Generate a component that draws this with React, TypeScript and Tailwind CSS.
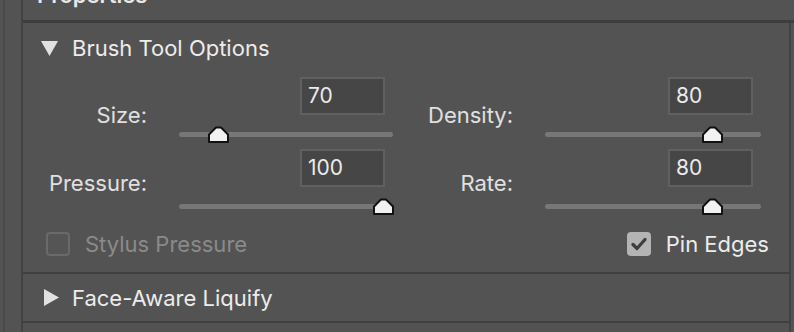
import type { ReactNode } from 'react';

type Field = {
  label: string;
  value: string;
  thumb: number;
  labelPad: string;
};

const rows: Field[][] = [
  [
    { label: 'Size:', value: '70', thumb: 29, labelPad: 'pt-[25px]' },
    { label: 'Density:', value: '80', thumb: 157, labelPad: 'pt-[25px]' },
  ],
  [
    { label: 'Pressure:', value: '100', thumb: 194, labelPad: 'pt-[21px]' },
    { label: 'Rate:', value: '80', thumb: 157, labelPad: 'pt-[21px]' },
  ],
];

function Thumb() {
  return (
    <svg width="21" height="17" viewBox="0 0 21 17">
      <polygon points="1,16 1,8.5 8,1.5 13,1.5 20,8.5 20,16" fill="#f1f1f1" stroke="#111" strokeWidth="2" strokeLinejoin="round" />
    </svg>
  );
}

function Control({ value, thumb }: { value: string; thumb: number }) {
  return (
    <div className="flex flex-col">
      <div className="self-end mr-2 w-[85px] h-[38px] bg-[#464646] border-2 border-[#606060] pl-[6px] flex items-center text-[21px] leading-6 text-[#ebebeb]">
        {value}
      </div>
      <div className="relative h-[28px]">
        <div className="mt-[17px] h-[5px] rounded-full bg-[#777777]" />
        {/* thumb sits over the track */}
        <div className="absolute top-[11px]" style={{ left: thumb }}>
          <Thumb />
        </div>
      </div>
    </div>
  );
}

function Label({ text, pad }: { text: string; pad: string }) {
  return <div className={`text-right text-[22px] leading-[26px] text-[#e0e0e0] ${pad}`}>{text}</div>;
}

function Check({ checked, children }: { checked: boolean; children: ReactNode }) {
  return (
    <div className="h-6 flex items-center gap-[15px]">
      {checked ? (
        <div className="w-6 h-6 rounded-[4px] bg-[#b4b4b4] flex items-center justify-center">
          <svg width="16" height="14" viewBox="0 0 16 14">
            <path d="M2 7.5 L6 11.5 L14 2.5" fill="none" stroke="#3e3e3e" strokeWidth="3.2" strokeLinecap="round" strokeLinejoin="round" />
          </svg>
        </div>
      ) : (
        <div className="w-6 h-6 rounded-[4px] border-2 border-[#6a6a6a] bg-[#555555]" />
      )}
      <span className={`text-[22px] leading-6 ${checked ? 'text-[#ececec]' : 'text-[#8a8a8a]'}`}>{children}</span>
    </div>
  );
}

export default function App() {
  return (
    <div className="w-[794px] h-[332px] bg-[#535353] flex overflow-hidden font-['Inter',sans-serif]">
      {/* left gutter */}
      <div className="w-[3px]" />
      <div className="w-[2px] bg-[#4a4a4a]" />
      <div className="w-4" />
      <div className="w-[2px] bg-[#424242]" />

      <div className="flex-1 flex flex-col">
        <div className="h-5 overflow-hidden pl-[14px]">
          <div className="-mt-[18px] text-[22px] leading-[26px] font-semibold text-[#e8e8e8]">Properties</div>
        </div>
        <div className="h-[3px] bg-[#3d3d3d]" />

        <div className="flex-1 flex flex-col mr-[3px] border-r-2 border-[#424242]">
          {/* Brush Tool Options */}
          <div className="pt-3 pb-4 flex flex-col">
            <div className="h-[26px] flex items-center pl-[18px]">
              <svg width="17" height="15" viewBox="0 0 17 15">
                <polygon points="0,0 17,0 8.5,15" fill="#e2e2e2" />
              </svg>
              <span className="ml-[14px] text-[22px] leading-[26px] text-[#ececec]">Brush Tool Options</span>
            </div>

            <div className="mt-4 grid grid-cols-[124px_214px_88px_216px] gap-x-8 gap-y-[6px]">
              {rows.map((row) =>
                row.map((f) => [
                  <Label key={f.label + 'l'} text={f.label} pad={f.labelPad} />,
                  <Control key={f.label + 'c'} value={f.value} thumb={f.thumb} />,
                ])
              )}
            </div>

            <div className="mt-[17px] flex justify-between pl-[23px] pr-5">
              <Check checked={false}>Stylus Pressure</Check>
              <Check checked>Pin Edges</Check>
            </div>
          </div>

          {/* Face-Aware Liquify */}
          <div className="h-[51px] border-y-2 border-[#404040] flex items-center pl-[21px]">
            <svg width="15" height="17" viewBox="0 0 15 17">
              <polygon points="0,0 15,8.5 0,17" fill="#e2e2e2" />
            </svg>
            <span className="ml-[13px] text-[22px] leading-[26px] text-[#ececec]">Face-Aware Liquify</span>
          </div>
          <div className="flex-1" />
        </div>
      </div>
    </div>
  );
}
